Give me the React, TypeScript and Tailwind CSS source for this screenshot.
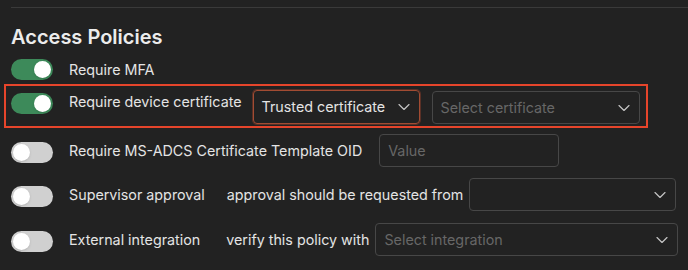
import { ChevronDown } from 'lucide-react';

function Toggle({ on }: { on?: boolean }) {
  return (
    <div
      className={`flex h-[21px] w-[42px] shrink-0 items-center rounded-full px-[2px] ${
        on ? 'justify-end bg-[#3d8a5a]' : 'justify-start bg-[#d0d0d0]'
      }`}
    >
      <div className="h-[17px] w-[17px] rounded-full bg-white shadow-sm" />
    </div>
  );
}

function Select({
  value,
  placeholder,
  className,
}: {
  value?: string;
  placeholder?: string;
  className?: string;
}) {
  return (
    <div
      className={`flex h-[33px] shrink-0 items-center justify-between rounded-[4px] border border-[#474747] pl-[8px] pr-[5px] ${className ?? ''}`}
    >
      {value ? (
        <span className="text-[#e4e4e4]">{value}</span>
      ) : (
        <span className="text-[#676767]">{placeholder}</span>
      )}
      <ChevronDown size={20} strokeWidth={1.4} className="text-[#c4c4c4]" />
    </div>
  );
}

export default function App() {
  return (
    <div className="h-[270px] w-[688px] overflow-hidden whitespace-nowrap bg-[#222222] pl-[4px] pt-[7px] font-['Inter',sans-serif] text-[14.3px] leading-[20px] text-[#e4e4e4]">
      <div className="ml-[7px] h-px bg-[#3a3a3a]" />

      <h2 className="ml-[7px] mt-[17px] text-[20px] font-semibold leading-[24px] text-[#ececec]">
        Access Policies
      </h2>

      {/* Require MFA */}
      <div className="mt-[10px] flex items-center gap-[16px] px-[7px]">
        <Toggle on />
        <span>Require MFA</span>
      </div>

      {/* Require device certificate */}
      <div className="mt-[4px] flex w-[644px] items-start border-2 border-[#e6452b] pb-[2px] pl-[5px] pt-[4px]">
        <div className="mt-[3px]">
          <Toggle on />
        </div>
        <span className="ml-[16px] mt-[2px]">Require device certificate</span>
        <Select
          value="Trusted certificate"
          className="ml-[11px] h-[34px] w-[167px] border-[#a24c33] ring-1 ring-[#5a3026]"
        />
        <Select placeholder="Select certificate" className="ml-[12px] mt-[1px] h-[32px] w-[208px]" />
      </div>

      {/* MS-ADCS template OID */}
      <div className="mt-[6px] flex items-center px-[7px]">
        <div className="mt-[4px]">
          <Toggle />
        </div>
        <span className="ml-[16px]">Require MS-ADCS Certificate Template OID</span>
        <div className="ml-[17px] flex h-[33px] w-[180px] shrink-0 items-center rounded-[4px] border border-[#474747] px-[8px] text-[#676767]">
          Value
        </div>
      </div>

      {/* Supervisor approval */}
      <div className="mt-[11px] flex items-center px-[7px]">
        <div className="mt-[4px]">
          <Toggle />
        </div>
        <span className="ml-[16px]">Supervisor approval</span>
        <span className="ml-[22px]">approval should be requested from</span>
        <Select className="ml-[6px] w-[207px]" />
      </div>

      {/* External integration */}
      <div className="mt-[12px] flex items-center px-[7px]">
        <div className="mt-[4px]">
          <Toggle />
        </div>
        <span className="ml-[16px]">External integration</span>
        <span className="ml-[26px]">verify this policy with</span>
        <Select placeholder="Select integration" className="ml-[6px] w-[303px]" />
      </div>
    </div>
  );
}
